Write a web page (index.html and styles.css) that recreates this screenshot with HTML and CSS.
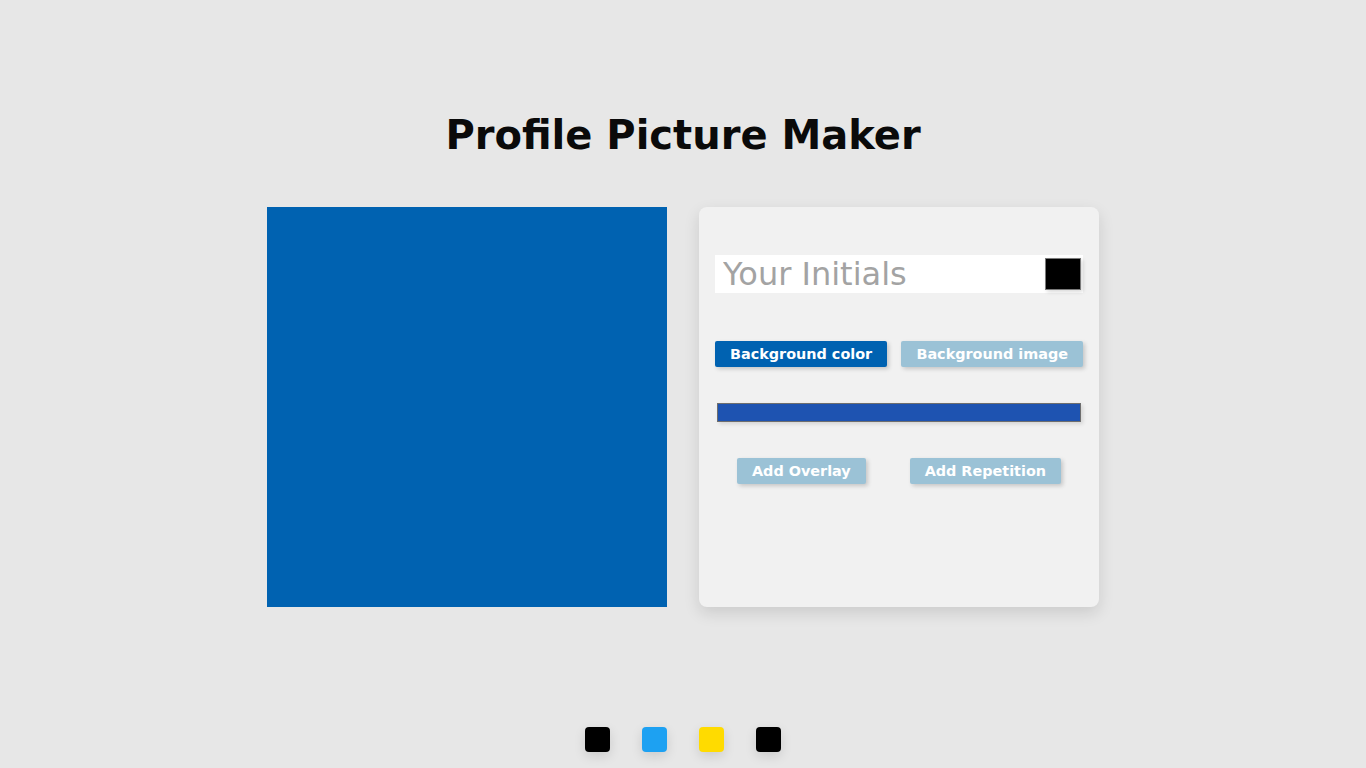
FILE: index.html
```html
<!DOCTYPE html>
<html>
<head>
<meta charset="utf-8">
<title>Profile Picture Maker</title>
<link rel="stylesheet" href="styles.css">
</head>
<body>
<div class="page">
  <h1 class="title">Profile Picture Maker</h1>
  <div class="main">
    <div class="preview"></div>
    <div class="panel">
      <div class="initials-row">
        <input class="initials" type="text" placeholder="Your Initials">
        <div class="text-color"></div>
      </div>
      <div class="tabs">
        <button class="btn btn-active">Background color</button>
        <button class="btn">Background image</button>
      </div>
      <div class="bg-bar"></div>
      <div class="actions">
        <button class="btn">Add Overlay</button>
        <button class="btn">Add Repetition</button>
      </div>
    </div>
  </div>
  <div class="swatches">
    <div class="swatch sw-black"></div>
    <div class="swatch sw-blue"></div>
    <div class="swatch sw-yellow"></div>
    <div class="swatch sw-black"></div>
  </div>
</div>
</body>
</html>
```

FILE: styles.css
```css
html, body {
  margin: 0;
  padding: 0;
  background: #e7e7e7;
  font-family: "DejaVu Sans", sans-serif;
}
.page {
  height: 768px;
  display: flex;
  flex-direction: column;
  align-items: center;
}
.title {
  margin: 111px 0 0 0;
  font-size: 40px;
  line-height: 48px;
  font-weight: bold;
  color: #0a0a0a;
}
.main {
  margin-top: 48px;
  display: flex;
  gap: 32px;
}
.preview {
  width: 400px;
  height: 400px;
  background: #0062b1;
}
.panel {
  width: 400px;
  height: 400px;
  box-sizing: border-box;
  padding: 48px 16px 0 16px;
  background: #f1f1f1;
  border-radius: 8px;
  box-shadow: 0 6px 16px rgba(0,0,0,0.12);
}
.initials-row {
  position: relative;
  height: 38px;
  background: #ffffff;
}
.initials {
  width: 100%;
  height: 38px;
  box-sizing: border-box;
  border: none;
  outline: none;
  padding: 0 8px;
  font-family: "DejaVu Sans", sans-serif;
  font-size: 32px;
  background: transparent;
  color: #222;
}
.initials::placeholder {
  color: #a3a3a3;
}
.text-color {
  position: absolute;
  right: 2px;
  top: 3px;
  width: 34px;
  height: 30px;
  background: #000;
  border: 1px solid #7a7a7a;
  box-shadow: 2px 2px 4px rgba(0,0,0,0.15);
}
.tabs {
  margin-top: 48px;
  display: flex;
  justify-content: space-between;
}
.btn {
  height: 26px;
  padding: 0 15px;
  border: none;
  border-radius: 2px;
  background: #9bc2d6;
  color: #ffffff;
  font-family: "DejaVu Sans", sans-serif;
  font-size: 14.4px;
  font-weight: bold;
  box-shadow: 2px 2px 4px rgba(0,0,0,0.18);
  cursor: pointer;
}
.btn-active {
  background: #0062b1;
}
.bg-bar {
  margin: 36px 2px 0 2px;
  height: 19px;
  box-sizing: border-box;
  background: #1e53b1;
  border: 1px solid #6e6e6e;
  box-shadow: 2px 2px 4px rgba(0,0,0,0.12);
}
.actions {
  margin-top: 36px;
  display: flex;
  justify-content: space-around;
}
.swatches {
  margin-top: 120px;
  display: flex;
  gap: 32px;
}
.swatch {
  width: 25px;
  height: 25px;
  border-radius: 4px;
  box-shadow: 0 4px 12px rgba(0,0,0,0.12);
}
.sw-black { background: #000; }
.sw-blue { background: #1da1f2; }
.sw-yellow { background: #ffdb00; }
```
